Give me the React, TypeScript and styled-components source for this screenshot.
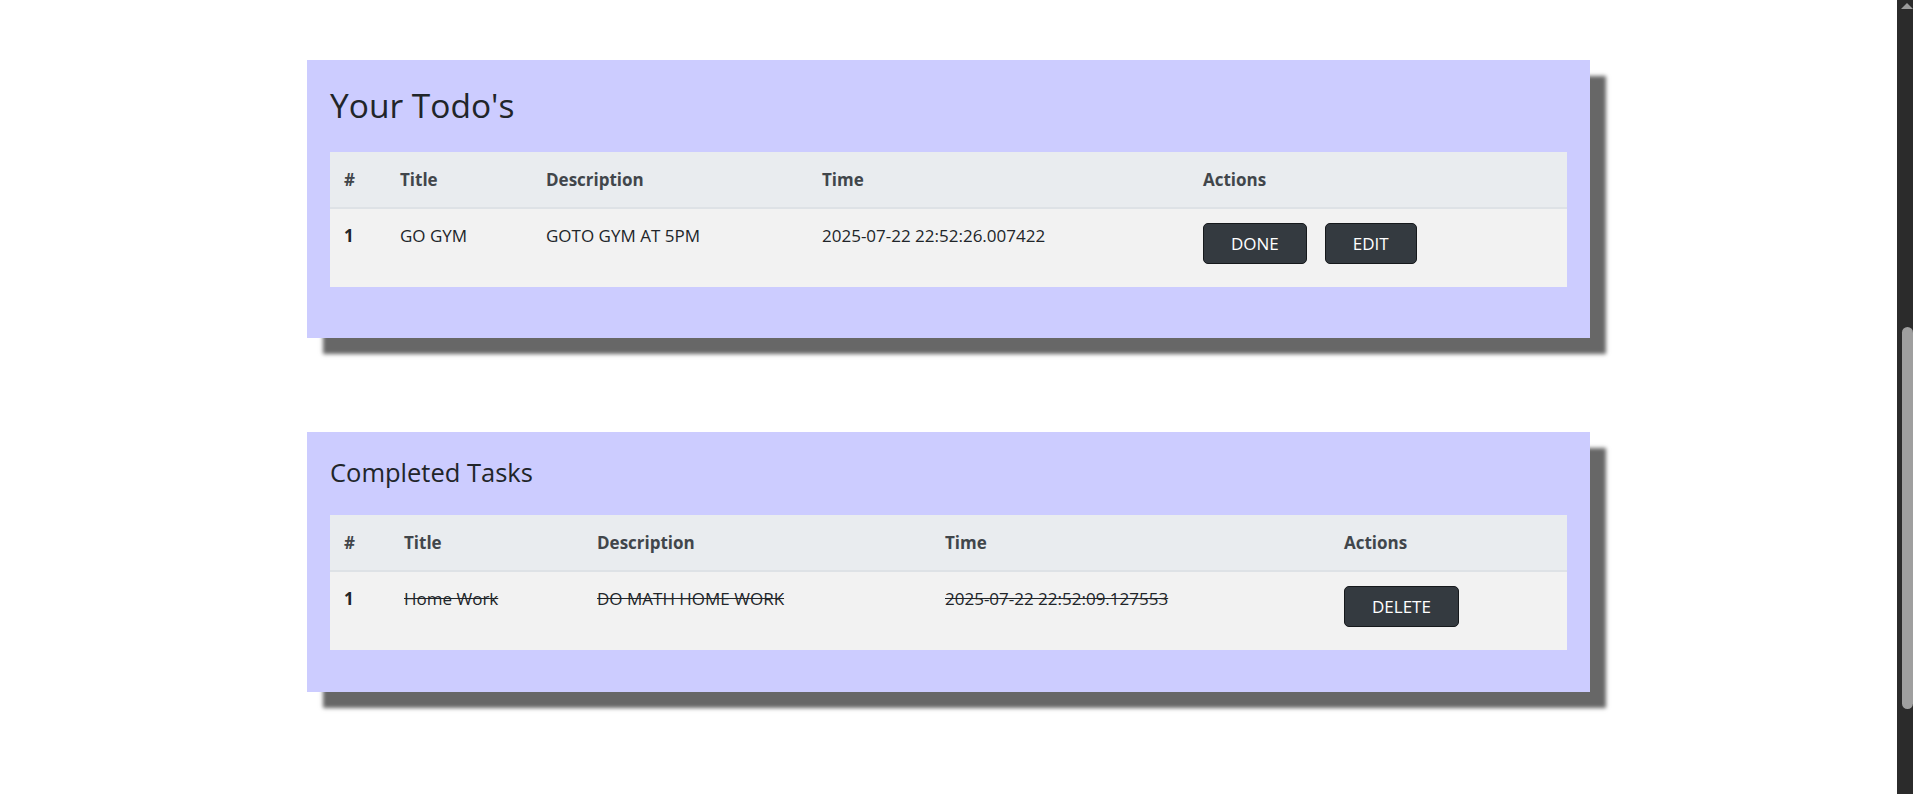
import styled, { createGlobalStyle } from "styled-components";

const GlobalStyle = createGlobalStyle`
  html, body {
    margin: 0;
    padding: 0;
    background: #fff;
    overflow: hidden;
  }
  body {
    font-family: "Open Sans", "Noto Sans", sans-serif;
    color: #212529;
  }
`;

type Todo = {
  sno: number;
  title: string;
  desc: string;
  time: string;
};

const todos: Todo[] = [
  { sno: 1, title: "GO GYM", desc: "GOTO GYM AT 5PM", time: "2025-07-22 22:52:26.007422" },
];

const completed: Todo[] = [
  { sno: 1, title: "Home Work", desc: "DO MATH HOME WORK", time: "2025-07-22 22:52:09.127553" },
];

const Page = styled.div`
  display: flex;
  height: 100vh;
  overflow: hidden;
`;

const Main = styled.main`
  flex: 1;
  display: flex;
  flex-direction: column;
  align-items: center;
  gap: 94px;
  padding-top: 60px;
`;

const Card = styled.section<{ $padTop: number; $padBottom: number }>`
  width: 1283px;
  box-sizing: border-box;
  background: #ccccff;
  padding: ${(p) => p.$padTop}px 23px ${(p) => p.$padBottom}px;
  box-shadow: 16px 16px 4px #676767;
`;

const Heading = styled.h2<{ $size: number; $lh: number; $gap: number }>`
  margin: 0 0 ${(p) => p.$gap}px;
  font-size: ${(p) => p.$size}px;
  line-height: ${(p) => p.$lh}px;
  font-weight: 500;
  color: #212529;
`;

const Table = styled.table`
  width: 100%;
  table-layout: fixed;
  border-collapse: collapse;
  font-size: 17px;
  line-height: 25.5px;
  vertical-align: top;
`;

const Col = styled.col<{ $w: number }>`
  width: ${(p) => p.$w}px;
`;

const HeadRow = styled.tr`
  background: #e9ecef;
  border-bottom: 2px solid #dee2e6;
`;

const HeadCell = styled.th`
  text-align: left;
  font-weight: 700;
  color: #41464b;
  padding: 14.75px 14px;
`;

const BodyRow = styled.tr`
  background: #f2f2f2;
`;

const IndexCell = styled.th`
  text-align: left;
  font-weight: 700;
  padding: 14px;
  vertical-align: top;
`;

const Cell = styled.td<{ $struck?: boolean }>`
  padding: 14px;
  vertical-align: top;
  white-space: nowrap;
  text-decoration: ${(p) => (p.$struck ? "line-through" : "none")};
`;

const ActionCell = styled.td`
  padding: 14px 14px 23px;
  vertical-align: top;
`;

const ButtonGroup = styled.div`
  display: flex;
  gap: 18px;
`;

const Button = styled.button`
  font-family: inherit;
  font-size: 17px;
  line-height: 25.5px;
  padding: 6.75px 27px;
  color: #fff;
  background: #343a40;
  border: 1px solid #16191c;
  border-radius: 5px;
  cursor: pointer;
`;

const ScrollTrack = styled.div`
  width: 16px;
  flex-shrink: 0;
  background: #2b2b2b;
  display: flex;
  flex-direction: column;
  padding-top: 3px;
  box-sizing: border-box;
`;

const ScrollArrow = styled.div`
  width: 0;
  height: 0;
  margin-left: 4px;
  border-left: 6px solid transparent;
  border-right: 6px solid transparent;
  border-bottom: 6px solid #9c9c9c;
`;

const ScrollThumb = styled.div`
  margin: 318px 0 0 5px;
  width: 11px;
  height: 382px;
  background: #9f9f9f;
  border-radius: 6px;
`;

type TableProps = {
  widths: number[];
  rows: Todo[];
  struck?: boolean;
  actions: string[];
};

function TaskTable({ widths, rows, struck, actions }: TableProps) {
  return (
    <Table>
      <colgroup>
        {widths.map((w, i) => (
          <Col key={i} $w={w} />
        ))}
      </colgroup>
      <thead>
        <HeadRow>
          <HeadCell>#</HeadCell>
          <HeadCell>Title</HeadCell>
          <HeadCell>Description</HeadCell>
          <HeadCell>Time</HeadCell>
          <HeadCell>Actions</HeadCell>
        </HeadRow>
      </thead>
      <tbody>
        {rows.map((t) => (
          <BodyRow key={t.sno}>
            <IndexCell scope="row">{t.sno}</IndexCell>
            <Cell $struck={struck}>{t.title}</Cell>
            <Cell $struck={struck}>{t.desc}</Cell>
            <Cell $struck={struck}>{t.time}</Cell>
            <ActionCell>
              <ButtonGroup>
                {actions.map((a) => (
                  <Button key={a}>{a}</Button>
                ))}
              </ButtonGroup>
            </ActionCell>
          </BodyRow>
        ))}
      </tbody>
    </Table>
  );
}

export default function App() {
  return (
    <Page>
      <GlobalStyle />
      <Main>
        <Card $padTop={25} $padBottom={51}>
          <Heading $size={33.5} $lh={40} $gap={27}>
            Your Todo's
          </Heading>
          <TaskTable widths={[56, 146, 276, 381, 378]} rows={todos} actions={["DONE", "EDIT"]} />
        </Card>
        <Card $padTop={25} $padBottom={42}>
          <Heading as="h4" $size={25.5} $lh={31} $gap={27}>
            Completed Tasks
          </Heading>
          <TaskTable
            widths={[60, 193, 348, 399, 237]}
            rows={completed}
            struck
            actions={["DELETE"]}
          />
        </Card>
      </Main>
      <ScrollTrack>
        <ScrollArrow />
        <ScrollThumb />
      </ScrollTrack>
    </Page>
  );
}
